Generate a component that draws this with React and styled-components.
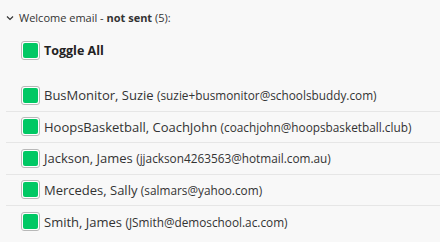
import styled, { createGlobalStyle } from "styled-components";

const GlobalStyle = createGlobalStyle`
  body {
    margin: 0;
    background: #f8f8f8;
    font-family: "Open Sans", "Noto Sans", sans-serif;
    color: #333;
  }
`;

const recipients = [
  { name: "BusMonitor, Suzie", email: "suzie+busmonitor@schoolsbuddy.com" },
  { name: "HoopsBasketball, CoachJohn", email: "coachjohn@hoopsbasketball.club" },
  { name: "Jackson, James", email: "jjackson4263563@hotmail.com.au" },
  { name: "Mercedes, Sally", email: "salmars@yahoo.com" },
  { name: "Smith, James", email: "JSmith@demoschool.ac.com" },
];

const Check = () => (
  <Box>
    <Fill />
  </Box>
);

const App = () => {
  return (
    <>
      <GlobalStyle />
      <Panel>
        <Heading>
          <Chevron width="8" height="6" viewBox="0 0 8 6">
            <path d="M1 1.5 L4 4.5 L7 1.5" fill="none" stroke="#333" strokeWidth="1.2" />
          </Chevron>
          <span>
            Welcome email - <b>not sent</b> (5):
          </span>
        </Heading>

        <ToggleRow>
          <Check />
          <ToggleLabel>Toggle All</ToggleLabel>
        </ToggleRow>

        <List>
          {recipients.map((r) => (
            <Row key={r.email}>
              <Check />
              <Name>
                {r.name} <Email>({r.email})</Email>
              </Name>
            </Row>
          ))}
        </List>
      </Panel>
    </>
  );
};

export default App;

const Panel = styled.div`
  padding: 10px 0 0 6px;
`;

const Heading = styled.div`
  display: flex;
  align-items: center;
  gap: 5px;
  font-size: 11px;
  height: 15px;
  color: #333;

  b {
    font-weight: 700;
  }
`;

const Chevron = styled.svg`
  flex: none;
  margin-top: 1px;
`;

const ToggleRow = styled.div`
  display: flex;
  align-items: center;
  gap: 4px;
  padding-left: 15px;
  margin-top: 16px;
  height: 19px;
`;

const ToggleLabel = styled.span`
  font-size: 12.5px;
  font-weight: 700;
  color: #222;
`;

const List = styled.div`
  margin-top: 20px;
`;

const Row = styled.div`
  display: flex;
  align-items: center;
  gap: 4px;
  height: 31.5px;
  padding-left: 15px;
  border-bottom: 1px solid #e6e6e6;
  box-sizing: border-box;

  &:last-child {
    border-bottom: none;
  }
`;

const Box = styled.span`
  flex: none;
  width: 19px;
  height: 19px;
  box-sizing: border-box;
  border: 1px solid #b8b8b8;
  border-radius: 3px;
  background: #fff;
  padding: 1px;
  display: flex;
`;

const Fill = styled.span`
  flex: 1;
  border-radius: 2px;
  background: #00c864;
`;

const Name = styled.span`
  font-size: 13px;
  color: #333;
  white-space: nowrap;
`;

const Email = styled.span`
  font-size: 11.8px;
`;
